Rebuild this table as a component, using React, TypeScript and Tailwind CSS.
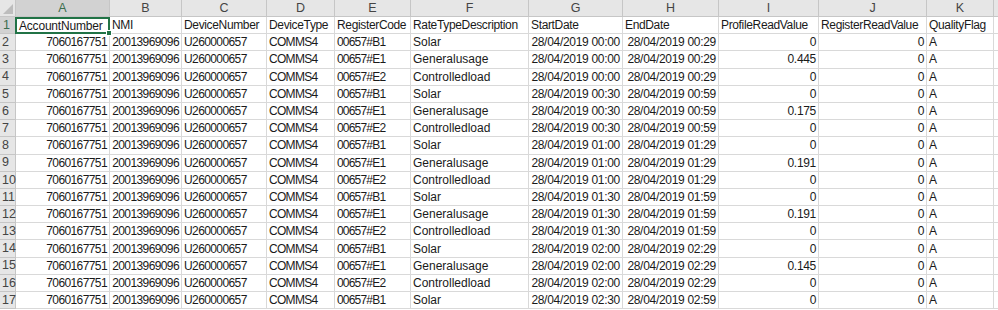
import React from "react";

const cols = ["A", "B", "C", "D", "E", "F", "G", "H", "I", "J", "K", ""];
const widths = [94, 72, 85, 68, 76, 118, 94, 96, 100, 108, 67, 20];

const headers = [
  "AccountNumber",
  "NMI",
  "DeviceNumber",
  "DeviceType",
  "RegisterCode",
  "RateTypeDescription",
  "StartDate",
  "EndDate",
  "ProfileReadValue",
  "RegisterReadValue",
  "QualityFlag",
  "",
];

const types = [
  ["00657#B1", "Solar"],
  ["00657#E1", "Generalusage"],
  ["00657#E2", "Controlledload"],
];
const starts = ["00:00", "00:30", "01:00", "01:30", "02:00", "02:30"];
const ends = ["00:29", "00:59", "01:29", "01:59", "02:29", "02:59"];
const profile = ["0", "0.445", "0", "0", "0.175", "0", "0", "0.191", "0", "0", "0.191", "0", "0", "0.145", "0", "0"];

const rows = Array.from({ length: 16 }, (_, i) => {
  const t = types[i % 3];
  const slot = Math.floor(i / 3);
  return [
    "7060167751",
    "20013969096",
    "U260000657",
    "COMMS4",
    t[0],
    t[1],
    "28/04/2019 " + starts[slot],
    "28/04/2019 " + ends[slot],
    profile[i],
    "0",
    "A",
    "",
  ];
});

// alignment and tracking per column
const cellCls = [
  "justify-end tracking-[-0.6px]",
  "justify-end tracking-[-0.6px]",
  "justify-start tracking-[-0.6px]",
  "justify-start tracking-[-0.7px]",
  "justify-start tracking-[-0.8px]",
  "justify-start",
  "justify-end tracking-[-0.3px]",
  "justify-end tracking-[-0.3px]",
  "justify-end tracking-[-0.3px]",
  "justify-end tracking-[-0.3px]",
  "justify-start",
  "justify-start",
];

export default function App() {
  const template = "16px " + widths.map((w) => w + "px").join(" ");
  return (
    <div
      className="w-[998px] h-[310px] overflow-hidden bg-white text-[12px] text-[#1a1a1a]"
      style={{ fontFamily: "'Liberation Sans', Arial, sans-serif" }}
    >
      <div className="grid" style={{ gridTemplateColumns: template }}>
        {/* Column header row */}
        <div className="relative h-[17px] bg-[#e6e6e6] border-r border-b border-[#c6c6c6]">
          <div className="absolute right-[2px] bottom-[2px] w-0 h-0 border-l-[10px] border-l-transparent border-b-[10px] border-b-[#bdbdbd]" />
        </div>
        {cols.map((c, i) => (
          <div
            key={"h" + i}
            className={
              "h-[17px] flex items-center justify-center border-r border-b border-[#c6c6c6] text-[12.5px] leading-none " +
              (i === 0 ? "bg-[#d2d2d2] text-[#3b6e4f]" : "bg-[#e6e6e6] text-[#444]")
            }
          >
            {c}
          </div>
        ))}

        {/* Row 1 */}
        <div className="h-[17.2px] flex items-center pl-[3px] bg-[#d2d2d2] border-r border-b border-[#c6c6c6] text-[#3b6e4f] text-[12.5px] leading-none">
          1
        </div>
        {headers.map((h, i) =>
          i === 0 ? (
            <div
              key={"r1" + i}
              className="relative h-[17.2px] flex items-center pl-[2px] border-2 border-[#217346] -ml-[1px] whitespace-nowrap tracking-[-0.2px]"
            >
              {h}
              <div className="absolute -right-[4px] -bottom-[4px] w-[6px] h-[6px] bg-[#217346] border border-white" />
            </div>
          ) : (
            <div
              key={"r1" + i}
              className="h-[17.2px] flex items-center px-[2px] border-r border-b border-[#d9d9d9] whitespace-nowrap overflow-hidden tracking-[-0.35px]"
            >
              {h}
            </div>
          )
        )}

        {rows.map((r, ri) => (
          <React.Fragment key={ri}>
            <div className="h-[17.2px] flex items-center pl-[2px] bg-[#e6e6e6] border-r border-b border-[#c6c6c6] text-[#444] text-[12.5px] leading-none">
              {ri + 2}
            </div>
            {r.map((v, ci) => (
              <div
                key={ci}
                className={
                  "h-[17.2px] flex items-center px-[2px] border-r border-b border-[#d9d9d9] whitespace-nowrap overflow-hidden " +
                  cellCls[ci]
                }
              >
                {v}
              </div>
            ))}
          </React.Fragment>
        ))}
      </div>
    </div>
  );
}
